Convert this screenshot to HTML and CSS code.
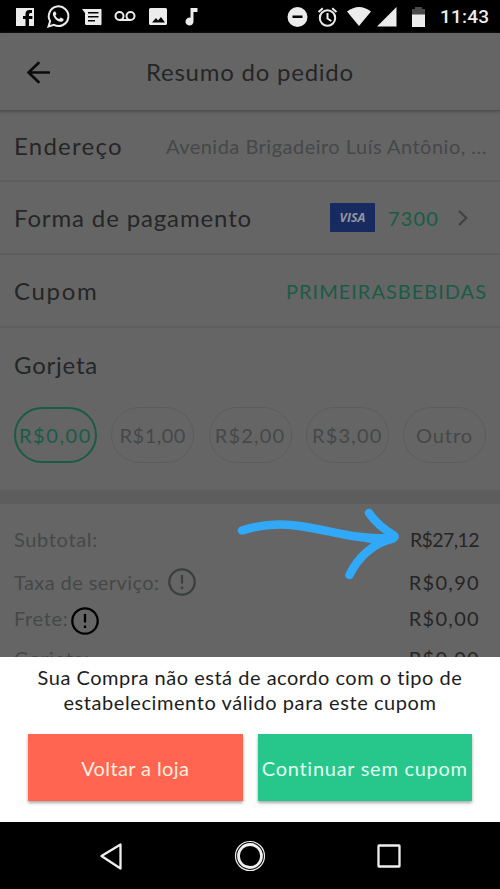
FILE: index.html
```
<!DOCTYPE html>
<html lang="pt-BR">
<head>
<meta charset="utf-8">
<title>Resumo do pedido</title>
<link rel="stylesheet" href="styles.css">
</head>
<body>
<div class="status">
  <svg class="status-icons" width="200" height="33" viewBox="0 0 200 33" fill="#ececec">
    <path d="M16 8h18v18h-5v-7h3.400v-3H29v-1.500q0-1.500 1.500-1.500H32v-3h-2.500q-4 0-4 4v2H23v3h2.500v7H16z"/>
    <path d="M48.500 26.500l1.600-5.400a9.800 9.800 0 1 1 3.800 3.700z" fill="none" stroke="#ececec" stroke-width="2"/>
    <path d="M54.200 11.500c-1.800 1-1.600 3.300-.4 5.300 1.600 2.800 4 4.600 6.400 5 1.900.3 3.600-.9 3.400-2.800l-2.900-1.500-1.500 1.600c-1.800-.7-3-2-3.800-3.600l1.100-1.500-1.200-2.500z"/>
    <path fill-rule="evenodd" d="M82 9h18a1 1 0 0 1 1.500 1v14a1 1 0 0 1-1.500 1H86.500a1.500 1.500 0 0 1-1.500-1.500V13zM88 12v1.600h10.500V12zm0 4v1.600h10.500V16zm0 4v1.600h7V20z"/>
    <g fill="none" stroke="#ececec" stroke-width="2"><circle cx="119.500" cy="16" r="4"/><circle cx="130.500" cy="16" r="4"/><path d="M119.500 20h11"/></g>
    <path fill-rule="evenodd" d="M150.500 8h15a1.500 1.500 0 0 1 1.500 1.500v14a1.500 1.500 0 0 1-1.500 1.500h-15a1.500 1.500 0 0 1-1.500-1.500v-14a1.500 1.500 0 0 1 1.500-1.500zM152 22.500h13l-4-5.500-3 3.500-2-2.500z"/>
    <path d="M190.500 8h7v4h-4v9.500a4 4 0 1 1-3-3.800z"/>
  </svg>
  <div class="status-right">
    <svg width="145" height="33" viewBox="-5 0 145 33" fill="#ececec">
      <path fill-rule="evenodd" d="M7.500 7a10 10 0 1 1 0 20 10 10 0 0 1 0-20zM2.500 15.500v2.500h10v-2.500z"/>
      <g fill="none" stroke="#ececec" stroke-width="2"><circle cx="37.500" cy="18" r="7.700"/><path d="M37.500 13v5.500l3.800 2.500M28.500 12l4.300-3.800M46.500 12l-4.300-3.800"/></g>
      <path d="M57 11.500q12-9 24 0L69 26zM87 26.500 106.500 7v19.500z"/>
      <path fill="#4a4a4a" d="M122 9h3V7h7v2h3v6h-13z"/><path d="M122 14.500h13V27h-13z"/>
    </svg>
    <span class="clock">11:43</span>
  </div>
</div>

<header class="header">
  <svg class="back" width="24" height="24" viewBox="0 0 24 24"><path d="M12.500 2 2.500 11.500l10 9.500M2.500 11.500H23" fill="none" stroke="#0b0b0b" stroke-width="2.600" stroke-linecap="round" stroke-linejoin="round"/></svg>
  <h1 class="title">Resumo do pedido</h1>
</header>

<main class="content">
  <div class="row"><span class="label label-address">Endereço</span><span class="address">Avenida Brigadeiro Luís Antônio, ...</span></div>
  <div class="row">
    <span class="label label-payment">Forma de pagamento</span>
    <div class="card-info">
      <span class="visa">VISA</span><span class="digits">7300</span>
      <svg width="12" height="18" viewBox="0 0 12 18"><path d="M2 2l7.300 7L2 16" fill="none" stroke="#414343" stroke-width="2.300"/></svg>
    </div>
  </div>
  <div class="row"><span class="label label-coupon">Cupom</span><span class="coupon">PRIMEIRASBEBIDAS</span></div>
  <section class="tip">
    <h2 class="label label-tip">Gorjeta</h2>
    <div class="pills">
      <span class="pill active">R$0,00</span><span class="pill one">R$1,00</span><span class="pill">R$2,00</span><span class="pill">R$3,00</span><span class="pill other">Outro</span>
    </div>
  </section>
  <section class="summary">
    <div class="line"><span class="name">Subtotal:</span><span class="value subtotal">R$27,12</span></div>
    <div class="line line-service"><span class="name service">Taxa de serviço:</span>
      <svg class="info info-service" width="28" height="28" viewBox="0 0 28 28"><circle cx="14" cy="14" r="12.700"/><path d="M14 7v8.500M14 18.500v2.500"/></svg>
      <span class="value">R$0,90</span></div>
    <div class="line line-freight"><span class="name">Frete:</span>
      <svg class="info info-freight" width="28" height="28" viewBox="0 0 28 28"><circle cx="14" cy="14" r="12.700"/><path d="M14 7v8.500M14 18.500v2.500"/></svg>
      <span class="value">R$0,00</span></div>
    <div class="line line-tip"><span class="name">Gorjeta:</span><span class="value">R$0,00</span></div>
    <svg class="arrow" width="170" height="80" viewBox="0 0 170 80"><path d="M10 26.500C48 14 78 24 112 30.500Q138 35.500 160 34M137 9q8 12 25 22.500 1.500 1.500-1 3C143 38 126 53 117.500 71M135 34q14 3 25 0" fill="none" stroke="#32a9f8" stroke-width="8.500" stroke-linecap="round" stroke-linejoin="round"/></svg>
  </section>
</main>

<section class="sheet">
  <p class="message"><span class="message-first">Sua Compra não está de acordo com o tipo de</span><br><span class="message-second">estabelecimento válido para este cupom</span></p>
  <div class="actions">
    <button class="button back-store">Voltar a loja</button>
    <button class="button proceed">Continuar sem cupom</button>
  </div>
</section>

<nav class="nav">
  <svg width="500" height="67" viewBox="0 0 500 67" fill="none" stroke="#eee">
    <path d="M101.500 34 120.500 22.500v24z" stroke-width="2.300" stroke-linejoin="round"/>
    <circle cx="250" cy="34" r="14.500" stroke-width="1.200"/><circle cx="250" cy="34" r="11.500" stroke-width="2.800"/>
    <rect x="378.500" y="23.500" width="21" height="21" rx=".5" stroke-width="2.300"/>
  </svg>
</nav>
</body>
</html>
```
FILE: styles.css
```
* { box-sizing: border-box; }
body {
  margin: 0;
  width: 500px;
  height: 889px;
  display: flex;
  flex-direction: column;
  overflow: hidden;
  background: #656565;
  color: #252626;
  font-family: Lato, "Liberation Sans", sans-serif;
  font-size: 20px;
  font-variant-ligatures: none;
  white-space: nowrap;
}
svg { display: block; flex: none; }
h1, h2, p { margin: 0; font-weight: 400; }

.status { height: 33px; flex: none; background: #000; display: flex; justify-content: space-between; }
.status-right { display: flex; width: 215px; }
.clock { flex: none; margin-left: 10px; font: 500 19px/34px Roboto, sans-serif; color: #ececec; letter-spacing: .2px; }

.header {
  height: 78px;
  flex: none;
  display: flex;
  align-items: center;
  padding-left: 26px;
  border-bottom: 1px solid #505050;
  box-shadow: 0 1px 3px #4d4d4d;
}
.back { margin-top: 2px; }
.title { margin-left: 96px; padding-top: 1px; font-size: 24px; line-height: 30px; letter-spacing: .76px; }

.content { height: 546px; flex: none; overflow: hidden; }
.row {
  height: 73px;
  display: flex;
  align-items: center;
  justify-content: space-between;
  padding: 0 13px 0 14px;
  border-bottom: 2px solid #5d5d5d;
}
.row:first-child { height: 71px; }
.label { font-size: 24px; line-height: 30px; }
.label-address { letter-spacing: 1.25px; }
.label-payment { letter-spacing: .86px; }
.label-coupon { letter-spacing: 1.7px; }
.label-tip { letter-spacing: .77px; }
.address { color: #454849; letter-spacing: .49px; }
.card-info { display: flex; align-items: center; margin-right: 18px; }
.visa {
  width: 45px; height: 29px; margin-right: 13px;
  background: #182b60; color: #92959c;
  border-radius: 1px;
  font: italic bold 12.5px/29px "Open Sans", sans-serif;
  text-align: center;
}
.digits { width: 69px; color: #195c46; letter-spacing: 1.15px; }
.coupon { color: #195c46; letter-spacing: 1px; }

.tip { height: 162px; padding: 22px 14px 0; }
.pills { display: flex; justify-content: space-between; margin-top: 27px; }
.pill {
  width: 83px; height: 56px;
  display: flex; align-items: center; justify-content: center;
  border: 1.500px solid #5b5d5d;
  border-radius: 28px;
  color: #454848;
  letter-spacing: 1.2px;
}
.pill.active { border: 2px solid #195c46; color: #195c46; letter-spacing: 1.6px; }
.pill.one { letter-spacing: .5px; }
.pill.other { letter-spacing: .9px; }

.summary { position: relative; height: 210px; border-top: 14px solid #5d5d5d; padding: 20px 20px 0 14px; }
.line { height: 30px; display: flex; align-items: center; }
.line-service { margin-top: 13px; }
.line-freight { margin-top: 6px; }
.line-tip { margin-top: 10px; }
.name { color: #454849; letter-spacing: .65px; }
.service { letter-spacing: .42px; }
.value { margin-left: auto; letter-spacing: 1.3px; }
.subtotal { font-size: 19.5px; letter-spacing: -.6px; margin-right: 1px; }
.info { fill: none; stroke-width: 2.300; }
.info-service { stroke: #3b3f3f; margin-left: 9px; }
.info-freight { stroke: #000; margin: 6px 0 0 3px; }
.arrow { position: absolute; left: 232px; top: 0; }

.sheet { height: 165px; flex: none; background: #fff; padding: 8px 28px 0; position: relative; }
.message { text-align: center; line-height: 25px; color: #1d1d1d; }
.message-first { letter-spacing: .52px; }
.message-second { letter-spacing: .58px; }
.actions { display: flex; gap: 15px; margin-top: 19px; }
.button {
  flex: 1;
  height: 67px;
  padding: 0;
  border: 0;
  font: 20px Lato, "Liberation Sans", sans-serif;
  color: #fff0e2;
  box-shadow: 0 2px 3px rgba(0, 0, 0, .35);
}
.back-store { background: #ff6550; letter-spacing: .4px; }
.proceed { background: #27c78b; color: #e0fff0; letter-spacing: .72px; }

.nav { height: 67px; flex: none; background: #000; }
```
